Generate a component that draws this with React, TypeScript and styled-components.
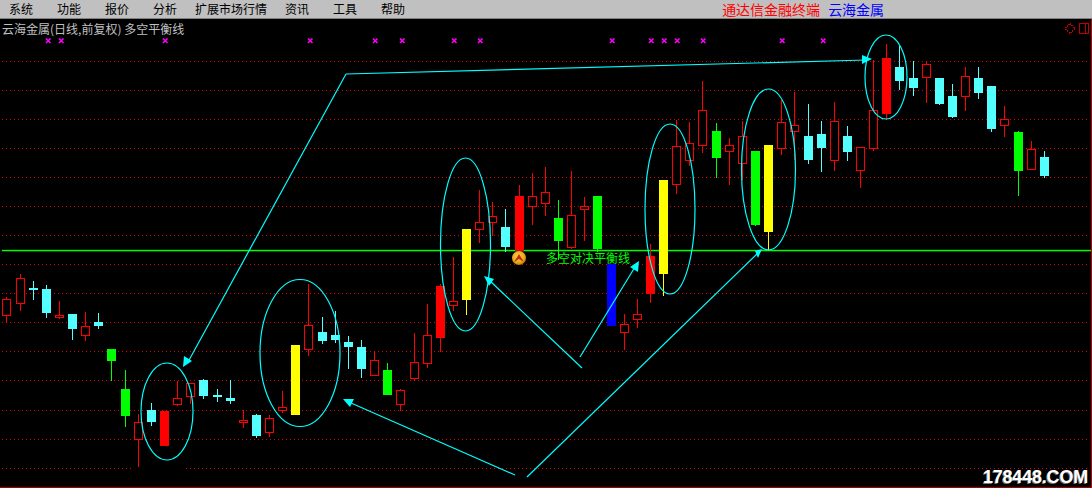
import React from "react";
import styled, { createGlobalStyle } from "styled-components";

const GlobalStyle = createGlobalStyle`
  html, body {
    margin: 0;
    padding: 0;
    background: #000;
  }
`;

const Page = styled.div`
  width: 1092px;
  height: 488px;
  display: flex;
  flex-direction: column;
  overflow: hidden;
  font-family: "Noto Sans CJK SC", "Liberation Sans", sans-serif;
`;

const MenuBar = styled.div`
  height: 18px;
  flex: none;
  display: flex;
  align-items: center;
  gap: 24px;
  padding-left: 9px;
  background: #c0c0c0;
  border-bottom: 1px solid #808080;
`;

const MenuItem = styled.span<{ $wide?: boolean }>`
  font-size: 12px;
  line-height: 18px;
  color: #000;
  margin: ${(p) => (p.$wide ? "0 -6px" : "0")};
`;

const Brand = styled.div`
  margin-left: 293px;
  display: flex;
  gap: 8px;
  font-size: 14px;
  line-height: 18px;
`;

const BrandName = styled.span<{ $color: string }>`
  color: ${(p) => p.$color};
`;

const ChartPanel = styled.div`
  position: relative;
  flex: 1;
  background: #000;
`;

const ChartSvg = styled.svg`
  display: block;
  width: 1092px;
  height: 469px;
`;

const ChartTitle = styled.div`
  position: absolute;
  left: 2px;
  top: 2px;
  font-size: 12px;
  line-height: 16px;
  color: #c0c0c0;
  white-space: pre;
`;

const ChartNote = styled.div`
  position: absolute;
  left: 546px;
  top: 231px;
  font-size: 12px;
  line-height: 16px;
  color: #00ff00;
`;

const Watermark = styled.div`
  position: absolute;
  right: 4px;
  bottom: 1px;
  font-family: "Liberation Sans", sans-serif;
  font-size: 18px;
  line-height: 20px;
  font-weight: 700;
  letter-spacing: -0.2px;
  color: #fff;
  text-shadow: -1px 1px 0 #777;
`;

const RED = "#ff0000";
const CYAN = "#54ffff";
const LINE = "#00ffff";
const GREEN = "#00ff00";
const YELLOW = "#ffff00";
const BLUE = "#0000ff";
const GRID = "#e00000";

type Kind = "h" | "r" | "c" | "g" | "y" | "b";

const kindColor: Record<Kind, string> = {
  h: RED,
  r: RED,
  c: CYAN,
  g: GREEN,
  y: YELLOW,
  b: BLUE,
};

// x, wick top, wick bottom, body top, body bottom, kind
const candles: [number, number, number, number, number, Kind][] = [
  [6, 297, 323, 299, 316, "h"],
  [20, 274, 311, 278, 304, "h"],
  [33, 281, 300, 288, 290, "c"],
  [46, 285, 318, 289, 313, "c"],
  [59, 301, 319, 315, 318, "h"],
  [72, 314, 340, 314, 329, "c"],
  [85, 312, 341, 326, 336, "h"],
  [98, 313, 329, 322, 326, "c"],
  [111, 349, 381, 349, 361, "g"],
  [125, 370, 427, 389, 416, "g"],
  [138, 414, 467, 422, 440, "h"],
  [151, 403, 426, 410, 422, "c"],
  [164, 411, 446, 411, 446, "r"],
  [177, 381, 406, 398, 405, "h"],
  [190, 383, 404, 383, 397, "h"],
  [203, 379, 399, 380, 396, "c"],
  [217, 389, 402, 395, 397, "c"],
  [230, 380, 404, 398, 401, "c"],
  [243, 410, 428, 420, 423, "h"],
  [256, 414, 438, 415, 436, "c"],
  [269, 415, 437, 418, 433, "h"],
  [282, 391, 413, 407, 411, "h"],
  [295, 345, 415, 345, 415, "y"],
  [308, 284, 356, 325, 350, "h"],
  [322, 317, 344, 332, 341, "c"],
  [335, 311, 343, 335, 340, "c"],
  [348, 336, 369, 342, 347, "c"],
  [361, 340, 378, 347, 369, "c"],
  [374, 351, 376, 360, 376, "h"],
  [387, 363, 395, 370, 395, "g"],
  [400, 389, 411, 390, 405, "h"],
  [414, 333, 381, 362, 379, "h"],
  [427, 304, 368, 335, 364, "h"],
  [440, 284, 352, 286, 338, "r"],
  [453, 257, 311, 301, 306, "h"],
  [466, 229, 315, 229, 300, "y"],
  [479, 190, 243, 222, 230, "h"],
  [492, 202, 236, 216, 223, "h"],
  [505, 209, 252, 227, 247, "c"],
  [519, 185, 251, 196, 251, "r"],
  [532, 173, 225, 196, 207, "h"],
  [545, 167, 216, 192, 204, "h"],
  [558, 200, 260, 218, 241, "g"],
  [571, 171, 249, 215, 248, "h"],
  [584, 197, 241, 206, 210, "h"],
  [597, 196, 252, 196, 249, "g"],
  [611, 264, 326, 264, 326, "b"],
  [624, 314, 350, 324, 333, "h"],
  [637, 299, 328, 314, 320, "h"],
  [650, 244, 303, 256, 294, "r"],
  [663, 180, 296, 180, 274, "y"],
  [676, 120, 194, 146, 185, "h"],
  [689, 122, 166, 143, 161, "h"],
  [702, 81, 153, 110, 146, "h"],
  [716, 123, 178, 131, 158, "g"],
  [729, 138, 185, 145, 152, "h"],
  [742, 121, 180, 136, 164, "h"],
  [755, 151, 226, 151, 225, "g"],
  [768, 145, 250, 145, 232, "y"],
  [781, 100, 155, 122, 149, "h"],
  [794, 92, 160, 125, 132, "h"],
  [808, 104, 164, 136, 160, "c"],
  [821, 121, 172, 134, 148, "c"],
  [834, 102, 171, 121, 161, "h"],
  [847, 126, 161, 136, 152, "c"],
  [860, 147, 188, 147, 171, "h"],
  [873, 60, 151, 110, 149, "h"],
  [886, 44, 120, 58, 114, "r"],
  [899, 46, 90, 67, 81, "c"],
  [913, 61, 96, 78, 88, "c"],
  [926, 61, 103, 64, 78, "h"],
  [939, 78, 105, 78, 104, "c"],
  [952, 84, 118, 96, 117, "c"],
  [965, 67, 111, 76, 97, "h"],
  [978, 67, 99, 78, 93, "c"],
  [991, 86, 132, 86, 129, "c"],
  [1004, 106, 137, 119, 126, "h"],
  [1018, 131, 196, 132, 171, "g"],
  [1031, 141, 170, 149, 170, "h"],
  [1044, 151, 178, 157, 176, "c"],
];

const gridYs = [61, 90, 119, 148, 177, 206, 235, 264, 293, 322, 351, 380, 410, 439];

const marks = [48, 61, 165, 310, 375, 402, 454, 480, 612, 651, 664, 677, 703, 782, 823];

const ellipses = [
  [167, 411.5, 26, 48.5],
  [300, 353, 40, 73.5],
  [465.5, 244.5, 25, 86.5],
  [670, 209, 25, 85],
  [768.5, 169.5, 27, 80.5],
  [886, 77, 21, 42],
];

const arrows: { line: string; head: string }[] = [
  { line: "346,74 188,362", head: "184,356 192,361 183,367" },
  { line: "346,74 866,60", head: "862,55 872,59 862,64" },
  { line: "515,475 351,403", head: "343,399 354,399 350,407" },
  { line: "527,477 759,252", head: "755,251 762,249 758,258" },
  { line: "582,368 489,280", head: "484,276 494,279 489,286" },
  { line: "580,357 635,267", head: "639,261 638,272 630,267" },
];

const Candle = ({ x, top, bottom, bodyTop, bodyBottom, kind }: {
  x: number;
  top: number;
  bottom: number;
  bodyTop: number;
  bodyBottom: number;
  kind: Kind;
}) => {
  const color = kindColor[kind];
  return (
    <g shapeRendering="crispEdges">
      <rect x={x} y={top} width={1} height={bottom - top} fill={color} />
      {kind === "h" ? (
        <rect
          x={x - 3.5}
          y={bodyTop + 0.5}
          width={8}
          height={bodyBottom - bodyTop - 1}
          fill="#000"
          stroke={color}
        />
      ) : (
        <rect x={x - 4} y={bodyTop} width={9} height={bodyBottom - bodyTop} fill={color} />
      )}
    </g>
  );
};

const GridLine = ({ y, from, to }: { y: number; from: number; to: number }) => (
  <line
    x1={from}
    x2={to}
    y1={y + 0.5}
    y2={y + 0.5}
    stroke={GRID}
    strokeDasharray="1 3"
    shapeRendering="crispEdges"
  />
);

const App = () => {
  return (
    <Page>
      <GlobalStyle />
      <MenuBar>
        <MenuItem>系统</MenuItem>
        <MenuItem>功能</MenuItem>
        <MenuItem>报价</MenuItem>
        <MenuItem>分析</MenuItem>
        <MenuItem $wide>扩展市场行情</MenuItem>
        <MenuItem>资讯</MenuItem>
        <MenuItem>工具</MenuItem>
        <MenuItem>帮助</MenuItem>
        <Brand>
          <BrandName $color="#ff0000">通达信金融终端</BrandName>
          <BrandName $color="#0000ff">云海金属</BrandName>
        </Brand>
      </MenuBar>
      <ChartPanel>
        <ChartSvg viewBox="0 19 1092 469">
          <defs>
            <radialGradient id="coin" cx="45%" cy="40%" r="65%">
              <stop offset="0%" stopColor="#ffd860" />
              <stop offset="70%" stopColor="#e8a010" />
              <stop offset="100%" stopColor="#a86800" />
            </radialGradient>
          </defs>

          {gridYs.map((y) => (
            <GridLine key={y} y={y} from={2} to={1090} />
          ))}
          <GridLine y={468} from={2} to={131} />
          <GridLine y={468} from={186} to={1090} />
          <rect x={2} y={249.8} width={1089} height={1.5} fill={GREEN} />
          <rect x={0} y={487} width={1092} height={1} fill="#a00000" shapeRendering="crispEdges" />
          <rect x={1091} y={19} width={1} height={469} fill="#c00000" shapeRendering="crispEdges" />

          <path d="M1070 23.5 L1075 28.5 L1070 33.5 L1065 28.5 Z" fill="none" stroke="#c00000" strokeDasharray="1.4 1" shapeRendering="crispEdges" />
          <path d="M1079.5 23.5 H1088.5 V33.5 H1079.5 Z M1085.5 23.5 V33.5" fill="none" stroke="#c00000" shapeRendering="crispEdges" />

          {marks.map((x) => (
            <path
              key={x}
              d={`M${x - 2} ${38.5} L${x + 2.5} ${43} M${x + 2.5} ${38.5} L${x - 2} ${43}`}
              stroke="#ff00ff"
              strokeWidth={1.6}
            />
          ))}

          {candles.map(([x, top, bottom, bodyTop, bodyBottom, kind]) => (
            <Candle key={x} x={x} top={top} bottom={bottom} bodyTop={bodyTop} bodyBottom={bodyBottom} kind={kind} />
          ))}

          {ellipses.map(([cx, cy, rx, ry]) => (
            <ellipse
              key={cx}
              cx={cx}
              cy={cy}
              rx={rx}
              ry={ry}
              fill="none"
              stroke={LINE}
              strokeWidth={1.2}
            />
          ))}

          {arrows.map((a) => (
            <g key={a.head}>
              <polyline points={a.line} fill="none" stroke={LINE} strokeWidth={1.2} />
              <polygon points={a.head} fill="#00ffff" />
            </g>
          ))}

          <circle cx={519} cy={258} r={7} fill="url(#coin)" />
          <path d="M514 262 L519 254 L524 262 L519 259 Z" fill="#c03010" />
        </ChartSvg>
        <ChartTitle>云海金属(日线,前复权) 多空平衡线</ChartTitle>
        <ChartNote>多空对决平衡线</ChartNote>
        <Watermark>178448.COM</Watermark>
      </ChartPanel>
    </Page>
  );
};

export default App;
